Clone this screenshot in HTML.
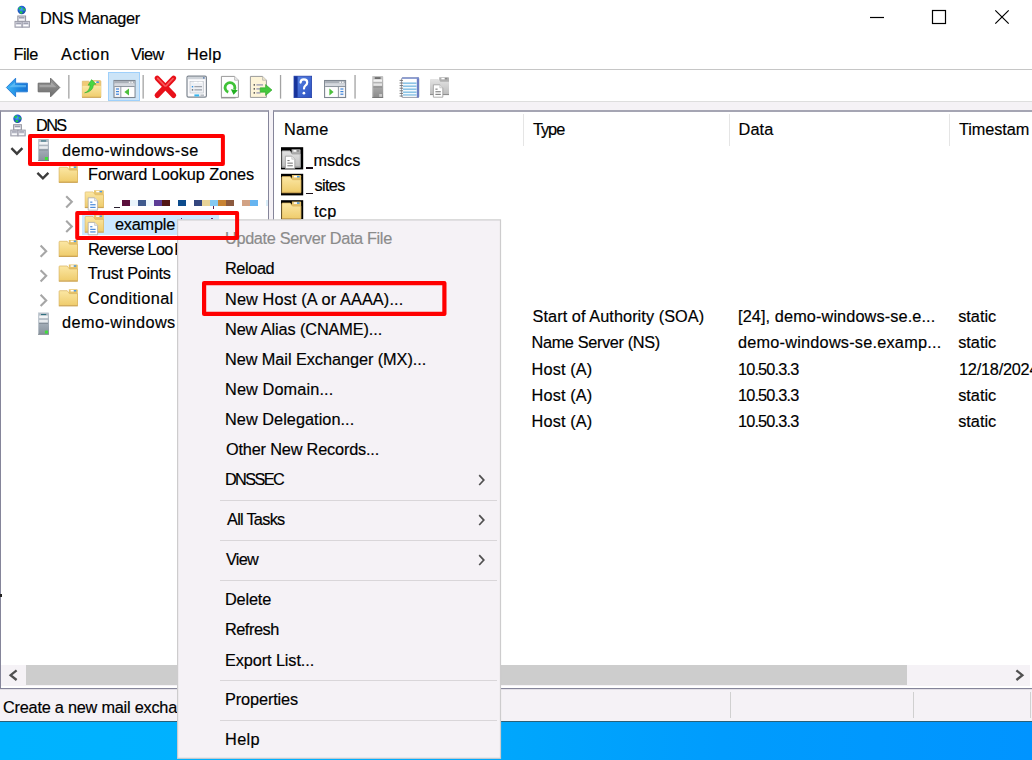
<!DOCTYPE html>
<html><head><meta charset="utf-8"><title>DNS Manager</title>
<style>
html,body{margin:0;padding:0;overflow:hidden;}
html{width:1032px;height:760px;}
body{width:1032px;height:760px;overflow:hidden;background:#fff;position:relative;font-family:"Liberation Sans",sans-serif;font-size:16px;color:#000;}
.a{position:absolute;}
.t{position:absolute;white-space:nowrap;line-height:20px;font-size:16.3px;height:20px;-webkit-text-stroke:0.18px currentColor;}
svg{position:absolute;overflow:visible;}
</style></head><body>
<!-- chrome lines -->
<div class="a" style="left:0;top:69px;width:1032px;height:1px;background:#c6c6c6"></div>
<div class="a" style="left:0;top:101px;width:1032px;height:9px;background:#f5f2f6"></div>
<div class="a" style="left:0;top:101px;width:1032px;height:1px;background:#dedede"></div>
<!-- panes -->
<div class="a" style="left:0;top:110px;width:269px;height:579px;background:#fff;border:1px solid #85859a;border-top:2px solid #a5a5b3;box-sizing:border-box"></div>
<div class="a" style="left:269px;top:110px;width:4px;height:579px;background:#f5f2f6"></div>
<div class="a" style="left:273px;top:110px;width:762px;height:579px;background:#fff;border:1px solid #85859a;border-top:2px solid #a5a5b3;box-sizing:border-box"></div>
<!-- column separators -->
<div class="a" style="left:523px;top:114px;width:1px;height:32px;background:#e5e5e5"></div>
<div class="a" style="left:729px;top:114px;width:1px;height:32px;background:#e5e5e5"></div>
<div class="a" style="left:949px;top:114px;width:1px;height:32px;background:#e5e5e5"></div>
<!-- selection highlight -->
<div class="a" style="left:82px;top:215px;width:137px;height:20px;background:#cce8ff"></div>
<!-- scrollbar -->
<div class="a" style="left:1px;top:665px;width:1029px;height:21px;background:#f5f2f6"></div>
<div class="a" style="left:26px;top:665px;width:881px;height:20px;background:#cdcdcd"></div>
<!-- status bar -->
<div class="a" style="left:0;top:689px;width:1032px;height:33px;background:#f5f2f6"></div>
<div class="a" style="left:730px;top:692px;width:1px;height:26px;background:#d0d0d0"></div>
<div class="a" style="left:913px;top:692px;width:1px;height:26px;background:#d0d0d0"></div>
<div class="a" style="left:1030px;top:692px;width:1px;height:26px;background:#d0d0d0"></div>
<div class="a" style="left:0;top:721px;width:1032px;height:1px;background:#2a6078"></div>
<div class="a" style="left:0;top:722px;width:1032px;height:38px;background:linear-gradient(90deg,#00b3ff 0%,#00b0ff 30%,#00a6fc 50%,#009cfd 70%,#0094ff 100%)"></div>
<!-- cursor artifact --><div class="a" style="left:0;top:594px;width:2px;height:3px;background:#222"></div>
<div class="a" style="left:0;top:689px;width:1032px;height:1px;background:#e2dfe6"></div>

<!-- texts -->
<div class="t" style="left:40.00px;top:8.35px;letter-spacing:-0.297px;">DNS Manager</div>
<div class="t" style="left:13.55px;top:43.60px;letter-spacing:-0.533px;">File</div>
<div class="t" style="left:61.00px;top:43.60px;letter-spacing:0.587px;">Action</div>
<div class="t" style="left:131.00px;top:43.60px;letter-spacing:-0.600px;">View</div>
<div class="t" style="left:187.00px;top:43.60px;letter-spacing:0.233px;">Help</div>
<div class="t" style="left:36.00px;top:114.85px;letter-spacing:-1.595px;">DNS</div>
<div class="t" style="left:62.00px;top:139.85px;letter-spacing:0.356px;">demo-windows-se</div>
<div class="t" style="left:88.00px;top:164.35px;letter-spacing:-0.065px;">Forward Lookup Zones</div>
<div class="t" style="left:115.00px;top:213.85px;letter-spacing:-0.224px;">example</div>
<div class="t" style="left:88.00px;top:238.85px;letter-spacing:-0.693px;">Reverse Loo</div>
<div class="t" style="left:174.40px;top:238.85px;letter-spacing:0.000px;">k</div>
<div class="t" style="left:87.80px;top:263.35px;letter-spacing:-0.279px;">Trust Points</div>
<div class="t" style="left:88.00px;top:288.35px;letter-spacing:0.373px;">Conditional</div>
<div class="t" style="left:62.00px;top:312.35px;letter-spacing:0.419px;">demo-windows</div>
<div class="t" style="left:284.00px;top:118.85px;letter-spacing:0.254px;">Name</div>
<div class="t" style="left:533.00px;top:118.85px;letter-spacing:-1.032px;">Type</div>
<div class="t" style="left:738.55px;top:118.85px;letter-spacing:0.081px;">Data</div>
<div class="t" style="left:959.00px;top:118.85px;letter-spacing:-0.094px;">Timestam</div>
<div class="t" style="left:313.55px;top:149.85px;letter-spacing:-0.074px;">msdcs</div>
<div class="t" style="left:314.55px;top:175.35px;letter-spacing:-0.684px;">sites</div>
<div class="t" style="left:314.00px;top:201.35px;letter-spacing:0.233px;">tcp</div>
<div class="t" style="left:532.55px;top:306.35px;letter-spacing:0.066px;">Start of Authority (SOA)</div>
<div class="t" style="left:531.55px;top:332.35px;letter-spacing:-0.350px;">Name Server (NS)</div>
<div class="t" style="left:531.55px;top:358.60px;letter-spacing:0.147px;">Host (A)</div>
<div class="t" style="left:531.55px;top:384.60px;letter-spacing:0.147px;">Host (A)</div>
<div class="t" style="left:531.55px;top:410.85px;letter-spacing:0.147px;">Host (A)</div>
<div class="t" style="left:738.00px;top:306.35px;letter-spacing:0.106px;">[24], demo-windows-se.e...</div>
<div class="t" style="left:738.00px;top:332.35px;letter-spacing:0.219px;">demo-windows-se.examp...</div>
<div class="t" style="left:738.00px;top:358.60px;letter-spacing:-0.838px;">10.50.3.3</div>
<div class="t" style="left:738.00px;top:384.60px;letter-spacing:-0.838px;">10.50.3.3</div>
<div class="t" style="left:738.00px;top:410.85px;letter-spacing:-0.838px;">10.50.3.3</div>
<div class="t" style="left:958.20px;top:306.35px;letter-spacing:-0.003px;">static</div>
<div class="t" style="left:958.20px;top:332.35px;letter-spacing:-0.003px;">static</div>
<div class="t" style="left:959.00px;top:358.60px;letter-spacing:-0.222px;">12/18/2024</div>
<div class="t" style="left:958.20px;top:384.60px;letter-spacing:-0.003px;">static</div>
<div class="t" style="left:958.20px;top:410.85px;letter-spacing:-0.003px;">static</div>
<div class="t" style="left:3.00px;top:696.85px;letter-spacing:-0.227px;">Create a new mail excha</div>
<!-- icons -->
<svg width="1032" height="760" style="left:0;top:0" viewBox="0 0 1032 760">
<defs>
<linearGradient id="gF" x1="0" y1="0" x2="0" y2="1"><stop offset="0" stop-color="#fbe7a4"/><stop offset="1" stop-color="#efcc6c"/></linearGradient>
<linearGradient id="gFg" x1="0" y1="0" x2="0" y2="1"><stop offset="0" stop-color="#e4e4e4"/><stop offset="1" stop-color="#bdbdbd"/></linearGradient>
<linearGradient id="gS" x1="0" y1="0" x2="0" y2="1"><stop offset="0" stop-color="#b9c2cb"/><stop offset="0.5" stop-color="#a3adb7"/><stop offset="1" stop-color="#87919b"/></linearGradient>
<linearGradient id="gSg" x1="0" y1="0" x2="0" y2="1"><stop offset="0" stop-color="#c4c4c4"/><stop offset="0.5" stop-color="#a8a8a8"/><stop offset="1" stop-color="#8a8a8a"/></linearGradient>
<radialGradient id="gG" cx="0.45" cy="0.4" r="0.6"><stop offset="0" stop-color="#4aa8f4"/><stop offset="0.6" stop-color="#1f62d0"/><stop offset="1" stop-color="#1b3fa6"/></radialGradient>
<linearGradient id="gB" x1="0" y1="0" x2="1" y2="0"><stop offset="0" stop-color="#3fb6f5"/><stop offset="0.6" stop-color="#1a86e0"/><stop offset="1" stop-color="#1973d2"/></linearGradient>
<linearGradient id="gGr" x1="0" y1="0" x2="0" y2="1"><stop offset="0" stop-color="#9a9a9a"/><stop offset="1" stop-color="#6e6e6e"/></linearGradient>
<linearGradient id="gH" x1="0" y1="0" x2="1" y2="1"><stop offset="0" stop-color="#5a86e6"/><stop offset="1" stop-color="#2a4fc0"/></linearGradient>
<!-- DNS icon: origin at (0,0), size 15x22 -->
<g id="dns">
 <circle cx="7.3" cy="4.3" r="4.2" fill="url(#gG)"/>
 <path d="M4.2,2.2 q1.6,-1.6 3,-0.6 q-0.4,1.8 -2,2.2 q-1.2,0.2 -1,-1.6z M8.8,2.6 q1.6,-0.4 2.2,1.6 q-0.6,1.2 -1.8,0.6 q-0.8,-1 -0.4,-2.2z M5.4,5.6 q1.6,-0.4 3,0.8 q-0.4,1.8 -2,1.8 q-1.4,-0.8 -1,-2.6z" fill="#22cc44"/>
 <rect x="3.4" y="10.3" width="7.8" height="5.4" fill="#dcdde6" stroke="#94959f" stroke-width="1"/>
 <rect x="0.6" y="15.7" width="7.2" height="5.8" fill="#dcdde6" stroke="#9b9ca8" stroke-width="1"/>
 <rect x="7.8" y="15.7" width="7.2" height="5.8" fill="#dcdde6" stroke="#9b9ca8" stroke-width="1"/>
 <rect x="4.6" y="11.4" width="5.4" height="1.2" fill="#9a9cab"/><rect x="4.6" y="13.6" width="5.4" height="1.1" fill="#fff"/>
 <rect x="1.8" y="16.9" width="4.8" height="1.3" fill="#9a9cab"/><rect x="1.8" y="19.3" width="4.8" height="1.1" fill="#fff"/>
 <rect x="9" y="16.9" width="4.8" height="1.3" fill="#9a9cab"/><rect x="9" y="19.3" width="4.8" height="1.1" fill="#fff"/>
</g>
<!-- server icon 11x22 -->
<g id="srv">
 <rect x="0" y="0" width="11" height="22" rx="0.8" fill="url(#gS)"/>
 <rect x="0" y="0" width="1" height="22" fill="#c9d0d7" opacity="0.7"/>
 <rect x="3" y="1.4" width="5.2" height="1.1" fill="#2e6f7e"/>
 <rect x="1.2" y="3" width="8.6" height="2.6" fill="#f2f4f6"/>
 <rect x="1.2" y="7.2" width="8.6" height="2.6" fill="#e8ebee"/>
 <rect x="1" y="10.6" width="9" height="0.8" fill="#7e8892"/>
 <rect x="6.9" y="18" width="3" height="3" fill="#3fe03a"/>
 <rect x="0" y="21.3" width="11" height="0.7" fill="#6f7983"/>
</g>
<g id="srvg">
 <rect x="0" y="0" width="11" height="22" rx="0.8" fill="url(#gSg)"/>
 <rect x="0" y="0" width="1" height="22" fill="#d6d6d6" opacity="0.7"/>
 <rect x="2.6" y="1.4" width="5.8" height="1.3" fill="#4a4a4a"/>
 <rect x="1.2" y="3.4" width="8.6" height="2.4" fill="#f2f2f2"/>
 <rect x="1.2" y="7.4" width="8.6" height="2.4" fill="#e6e6e6"/>
 <rect x="1" y="10.6" width="9" height="0.8" fill="#808080"/>
 <rect x="7" y="18" width="2.8" height="2.8" fill="#c8c8c8"/>
 <rect x="0" y="21.3" width="11" height="0.7" fill="#6e6e6e"/>
</g>
<!-- folder 19x16 -->
<g id="fld">
 <path d="M10,0.3 H18 Q19,0.3 19,1.3 V16.4 H10Z" fill="#e6c268"/>
 <rect x="11.8" y="1" width="3.2" height="1.5" fill="#fff"/><rect x="15" y="1" width="2.4" height="1.5" fill="#4a9be6"/>
 <path d="M0.9,1.7 H8.4 L10.6,4.6 H18.7 V16.5 H0.3 V2.5 Q0.3,1.7 0.9,1.7Z" fill="url(#gF)" stroke="#d8b25c" stroke-width="0.7"/>
 <path d="M0,16.3 H19 V17.4 H0Z" fill="#cda555"/>
</g>
<g id="fldg">
 <path d="M10,0.3 H18 Q19,0.3 19,1.3 V16.4 H10Z" fill="#b0b0b0"/>
 <rect x="11.8" y="1" width="3.2" height="1.5" fill="#fff"/><rect x="15" y="1" width="2.4" height="1.5" fill="#8a8a8a"/>
 <path d="M0.9,1.7 H8.4 L10.6,4.6 H18.7 V16.5 H0.3 V2.5 Q0.3,1.7 0.9,1.7Z" fill="url(#gFg)" stroke="#9a9a9a" stroke-width="0.7"/>
 <path d="M0,16.3 H19 V17.4 H0Z" fill="#8f8f8f"/>
</g>
<!-- small document 10x13 -->
<g id="doc">
 <path d="M0.4,0.4 H6.8 L9.8,3.4 V12.8 H0.4Z" fill="#fff" stroke="#a9a9a9" stroke-width="0.8"/>
 <path d="M6.8,0.4 V3.4 H9.8" fill="#e9e9e9" stroke="#b5b5b5" stroke-width="0.6"/>
 <rect x="2.4" y="4.2" width="2.2" height="1.1" fill="#3b7fd6"/>
 <rect x="2.4" y="6.8" width="5.4" height="1.1" fill="#3b7fd6"/>
 <rect x="2.4" y="9.4" width="5.4" height="1.1" fill="#3b7fd6"/>
</g>
<g id="docg">
 <path d="M0.4,0.4 H6.8 L9.8,3.4 V12.8 H0.4Z" fill="#fff" stroke="#9a9a9a" stroke-width="0.8"/>
 <path d="M6.8,0.4 V3.4 H9.8" fill="#e9e9e9" stroke="#b5b5b5" stroke-width="0.6"/>
 <rect x="2.4" y="4.2" width="2.2" height="1.1" fill="#7c7c7c"/>
 <rect x="2.4" y="6.8" width="5.4" height="1.1" fill="#7c7c7c"/>
 <rect x="2.4" y="9.4" width="5.4" height="1.1" fill="#7c7c7c"/>
</g>
<!-- zone folder 19x21 -->
<g id="zone">
 <path d="M9.2,0.2 H18.2 Q19,0.2 19,1 V17 H9.2Z" fill="#e9c66e"/>
 <rect x="11.4" y="0.9" width="3.4" height="1.4" fill="#fff"/><rect x="14.8" y="0.9" width="2.4" height="1.4" fill="#4a9be6"/>
 <path d="M0.8,1.9 H8.2 L10.4,4.8 H18.7 V17.2 H0.3 V2.7 Q0.3,1.9 0.8,1.9Z" fill="url(#gF)" stroke="#dcb660" stroke-width="0.6"/>
 <path d="M0,17 H19 V18.1 H0Z" fill="#cda555"/>
 <use href="#doc" x="3" y="7.4"/>
</g>
<g id="zoneg">
 <path d="M9.2,0.2 H18.2 Q19,0.2 19,1 V17 H9.2Z" fill="#b0b0b0"/>
 <rect x="11.4" y="0.9" width="3.4" height="1.4" fill="#fff"/><rect x="14.8" y="0.9" width="2.4" height="1.4" fill="#8a8a8a"/>
 <path d="M0.8,1.9 H8.2 L10.4,4.8 H19 V17.2 H0 V2.7 Q0,1.9 0.8,1.9Z" fill="url(#gFg)"/>
 <path d="M0,17 H19 V18.1 H0Z" fill="#8f8f8f"/>
 <use href="#docg" x="3" y="7.4"/>
</g>
<path id="chd" d="M0,0 L5.5,5.5 L11,0" fill="none" stroke="#3c3c3c" stroke-width="2.4"/>
<path id="chr" d="M0,0 L5.6,5.6 L0,11.2" fill="none" stroke="#a6a6a6" stroke-width="2.1"/>
<path id="chm" d="M0,0 L4.6,4.9 L0,9.8" fill="none" stroke="#505050" stroke-width="1.7"/>
</defs>
<!-- title + tree DNS icons -->
<use href="#dns" x="14.4" y="5.7"/>
<use href="#dns" x="10.2" y="114.4"/>
<!-- window controls -->
<path d="M870,17.5 H884" stroke="#000" stroke-width="1.2"/>
<rect x="932.5" y="10.5" width="13" height="13" fill="none" stroke="#000" stroke-width="1.2"/>
<path d="M995.3,10.3 L1008.7,23.7 M1008.7,10.3 L995.3,23.7" stroke="#000" stroke-width="1.2"/>
<!-- tree icons -->
<use href="#chd" x="11.4" y="148.2"/>
<use href="#srv" x="38" y="139"/>
<use href="#chd" x="37.4" y="172.8"/>
<use href="#fld" x="58.8" y="165.5"/>
<use href="#chr" x="66.2" y="196.2"/>
<use href="#zone" x="84.8" y="190"/>
<use href="#chr" x="66.2" y="220.8"/>
<use href="#zone" x="84.8" y="214.6"/>
<use href="#chr" x="40.6" y="245.6"/>
<use href="#fld" x="58.8" y="239.6"/>
<use href="#chr" x="40.6" y="270.2"/>
<use href="#fld" x="58.8" y="264.3"/>
<use href="#chr" x="40.6" y="294.8"/>
<use href="#fld" x="58.8" y="289"/>
<use href="#srv" x="38" y="312.6"/>
<!-- TOOLBAR -->
<!-- back arrow -->
<path d="M6.4,87.5 L15.6,78.2 V83.2 H27.4 V91.8 H15.6 V96.8Z" fill="url(#gB)" stroke="#2a7fd8" stroke-width="1" stroke-linejoin="round"/>
<path d="M9.5,87.3 L15,82 V85 H26 V87.3Z" fill="#7fd0fb" opacity="0.55"/>
<!-- forward arrow -->
<path d="M59.8,87.5 L50.6,78.2 V83.2 H38.2 V91.8 H50.6 V96.8Z" fill="url(#gGr)" stroke="#6a6a6a" stroke-width="1" stroke-linejoin="round"/>
<path d="M56.5,87.3 L51,82 V85 H39.5 V87.3Z" fill="#c2c2c2" opacity="0.5"/>
<rect x="68.2" y="75" width="1.3" height="23.6" fill="#a3a3a3"/>
<!-- up folder -->
<path d="M82.3,81.2 H88.6 L90.2,82.6 H91.5 V80.6 H100 Q100.9,80.6 100.9,81.5 V97 H82.3Z" fill="#f1ca76" stroke="#d8b25c" stroke-width="0.6"/>
<rect x="94.6" y="81.5" width="2" height="1.4" fill="#fff"/><ellipse cx="97.6" cy="82.2" rx="1.5" ry="0.9" fill="#4f95e4"/>
<rect x="82.4" y="85.9" width="18.5" height="11.2" fill="url(#gF)"/>
<rect x="82" y="96.8" width="19" height="1" fill="#c9a050"/>
<path d="M84.6,92.8 q4.8,-1.2 5.6,-7.8 l-2.2,0.2 l3.6,-5.6 l4.4,4.6 l-2.4,0.3 q-0.6,7.4 -9,8.3z" fill="#48d642" stroke="#27a826" stroke-width="0.5"/>
<!-- selected button -->
<rect x="108.5" y="72.5" width="31" height="28" fill="#cce4f7" stroke="#9fd0fb" stroke-width="1"/>
<!-- console tree icon -->
<g id="con1">
<rect x="114" y="80.5" width="21" height="17" fill="#f4f4f6" stroke="#7d858f" stroke-width="1.1"/>
<rect x="114.5" y="81" width="20" height="2.6" fill="#aab0b8"/>
<rect x="114.5" y="83.6" width="20" height="2.4" fill="#d4d8de"/>
<rect x="114.5" y="86" width="20" height="0.9" fill="#858d97"/>
<rect x="120.4" y="86.5" width="1" height="10.5" fill="#858d97"/>
<rect x="128.8" y="81.6" width="1.6" height="1.4" fill="#f2f2f2"/><rect x="131.4" y="81.6" width="1.6" height="1.4" fill="#f2f2f2"/>
<rect x="116" y="88.4" width="3" height="1.2" fill="#3f86dc"/><rect x="116" y="91" width="3" height="1.2" fill="#3f86dc"/><rect x="116" y="93.6" width="3" height="1.2" fill="#3f86dc"/>
<rect x="121.6" y="87.2" width="12.6" height="9.6" fill="#fdfdfd"/>
<path d="M124.4,92 L129,88.6 V95.4Z" fill="#4cbf3c"/>
</g>
<rect x="142.5" y="75" width="1.3" height="23.6" fill="#a3a3a3"/>
<!-- red X -->
<path d="M157.2,78.2 L173.6,95.4 M173.6,78.2 L157.2,95.4" stroke="#e81019" stroke-width="5.2" stroke-linecap="round"/>
<path d="M157.6,78.4 L165,86 M173,78.6 L166,86" stroke="#f77" stroke-width="1.6" stroke-linecap="round" opacity="0.7"/>
<!-- properties -->
<rect x="187" y="76.2" width="19.4" height="21" rx="1.4" fill="#fbfbfd" stroke="#7e8690" stroke-width="1.2"/>
<rect x="187.8" y="77" width="17.8" height="2.2" fill="#cfd4da"/>
<rect x="203" y="77.2" width="1.6" height="1.4" fill="#5d7fb0"/>
<rect x="190" y="81.4" width="13.6" height="11.6" fill="#eef0f4" stroke="#b9bec6" stroke-width="0.6"/>
<rect x="194" y="81.8" width="3.4" height="1.3" fill="#fff"/><rect x="198.6" y="81.8" width="3.4" height="1.3" fill="#fff"/>
<rect x="191.8" y="86" width="1.4" height="1.4" fill="#2f8fe0"/><rect x="194.4" y="86.2" width="7.6" height="1" fill="#8a9099"/>
<rect x="191.8" y="89.2" width="1.4" height="1.4" fill="#5d646e"/><rect x="194.4" y="89.4" width="7.6" height="1" fill="#8a9099"/>
<rect x="194.4" y="94.4" width="4.8" height="2" fill="#34b4ee"/><rect x="200.4" y="94.4" width="3.6" height="2" fill="#b9bec6"/>
<!-- refresh -->
<path d="M221.4,76.4 H234.6 L238.4,80.2 V97.4 H221.4Z" fill="#fefefe" stroke="#9a9a9a" stroke-width="1"/>
<path d="M234.6,76.4 V80.2 H238.4" fill="#ececec" stroke="#aaa" stroke-width="0.7"/>
<path d="M235.6,97.9 H221 " stroke="#8a8a8a" stroke-width="1"/>
<path d="M228.3,92.1 A4.9,4.9 0 1 1 234.4,89.6" fill="none" stroke="#3fc236" stroke-width="2.8"/>
<path d="M230.8,89.2 L237.8,90.2 L233.6,94.8Z" fill="#22b022"/>
<!-- export list -->
<path d="M250.4,76.4 H262.6 L266.4,80.2 V97.4 H250.4Z" fill="#fdf4d8" stroke="#9a9a9a" stroke-width="1"/>
<path d="M262.6,76.4 V80.2 H266.4" fill="#f3ead0" stroke="#aaa" stroke-width="0.7"/>
<rect x="253.6" y="84.2" width="1.4" height="1.4" fill="#444"/><rect x="256.4" y="84.3" width="6.6" height="1.2" fill="#8d8fae"/>
<rect x="253.6" y="88.2" width="1.4" height="1.4" fill="#444"/><rect x="256.4" y="88.3" width="4" height="1.2" fill="#8d8fae"/>
<rect x="253.6" y="92.2" width="1.4" height="1.4" fill="#444"/><rect x="256.4" y="92.3" width="4" height="1.2" fill="#8d8fae"/>
<path d="M260.2,87.8 H265.6 V84.6 L272,90 L265.6,95.4 V92.2 H260.2Z" fill="#45c83c" stroke="#2aa228" stroke-width="0.6"/>
<rect x="279.9" y="75" width="1.3" height="23.6" fill="#a3a3a3"/>
<!-- help -->
<rect x="294" y="76.2" width="17.6" height="21.4" fill="url(#gH)"/>
<rect x="294" y="76.2" width="3.6" height="21.4" fill="#17339a"/>
<rect x="294" y="76.2" width="17.6" height="21.4" fill="none" stroke="#2440a8" stroke-width="0.8"/>
<path d="M300.6,82.6 q0,-3.2 3.3,-3.2 q3.3,0 3.3,3 q0,1.8 -1.6,2.9 q-1.6,1.1 -1.6,3.3" fill="none" stroke="#fff" stroke-width="2.2" stroke-linecap="round"/>
<circle cx="303.9" cy="93.2" r="1.35" fill="#fff"/>
<!-- console action icon -->
<rect x="324.6" y="80.5" width="21" height="17" fill="#f4f4f6" stroke="#7d858f" stroke-width="1.1"/>
<rect x="325.1" y="81" width="20" height="2.6" fill="#aab0b8"/>
<rect x="325.1" y="83.6" width="20" height="2.4" fill="#d4d8de"/>
<rect x="325.1" y="86" width="20" height="0.9" fill="#858d97"/>
<rect x="337.8" y="86.5" width="1" height="10.5" fill="#858d97"/>
<rect x="339.4" y="81.6" width="1.6" height="1.4" fill="#f2f2f2"/><rect x="342" y="81.6" width="1.6" height="1.4" fill="#f2f2f2"/>
<rect x="340.4" y="88.4" width="3" height="1.2" fill="#3f86dc"/><rect x="340.4" y="91" width="3" height="1.2" fill="#3f86dc"/><rect x="340.4" y="93.6" width="3" height="1.2" fill="#3f86dc"/>
<rect x="325.6" y="87.2" width="12" height="9.6" fill="#fdfdfd"/>
<path d="M333.6,92 L329.4,88.4 V95.6Z" fill="#4cbf3c"/>
<rect x="354.4" y="75" width="1.3" height="23.6" fill="#a3a3a3"/>
<!-- gray server -->
<use href="#srvg" x="372.2" y="76"/>
<!-- notebook -->
<rect x="401.6" y="77.8" width="17.2" height="19.6" rx="1" fill="#fff" stroke="#8c92a2" stroke-width="0.9"/>
<rect x="416.8" y="77.6" width="2.2" height="20" fill="#6d7fc4"/>
<rect x="402" y="77.4" width="17" height="1.4" fill="#7d8fd0"/>
<rect x="403" y="82.4" width="13.6" height="1.7" fill="#8cc4e6"/><rect x="403" y="85.4" width="13.6" height="1.7" fill="#8cc4e6"/><rect x="403" y="88.4" width="13.6" height="1.7" fill="#8cc4e6"/><rect x="403" y="91.4" width="13.6" height="1.7" fill="#8cc4e6"/><rect x="403" y="94.2" width="13.6" height="1.5" fill="#8cc4e6"/>
<g fill="none" stroke="#6b6b6b" stroke-width="0.9"><path d="M399.6,80.4 h3.4 M399.6,83 h3.4 M399.6,85.6 h3.4 M399.6,88.2 h3.4 M399.6,90.8 h3.4 M399.6,93.4 h3.4 M399.6,96 h3.4"/></g>
<!-- gray zone folder -->
<use href="#zoneg" x="430" y="77"/>
<!-- LIST -->
<rect x="281" y="147.2" width="22.2" height="22.2" fill="#000"/>
<g transform="translate(281.6,149) scale(1,1.09)"><use href="#fldg"/></g>
<use href="#docg" x="285" y="155.8" transform="translate(0,0)"/>
<rect x="281" y="173.8" width="22.2" height="21.6" fill="#000"/>
<g transform="translate(281.6,174.8) scale(1.03,1.06)"><use href="#fld"/></g>
<rect x="281" y="200.2" width="22.2" height="19" fill="#000"/>
<g transform="translate(281.6,201.2) scale(1.03,1.06)"><use href="#fld"/></g>
<!-- SCROLL -->
<path d="M16.6,670.4 L10.6,675.2 L16.6,680" fill="none" stroke="#505050" stroke-width="2.3"/>
<path d="M1016.4,670.4 L1022.4,675.2 L1016.4,680" fill="none" stroke="#505050" stroke-width="2.3"/>
<!-- pixelated (redacted) zone name -->
<g shape-rendering="crispEdges">
<rect x="114.4" y="207" width="5.8" height="1.3" fill="#2a2030"/>
<rect x="306.4" y="167.2" width="6.6" height="1.3" fill="#1a1018"/>
<rect x="306.4" y="192.7" width="6.6" height="1.3" fill="#1a1018"/>
<rect x="181" y="217.7" width="1.3" height="1" fill="#6a2a6a"/>
<rect x="211.2" y="217.7" width="1.3" height="1" fill="#6a2a6a"/>
<rect x="212.8" y="206.4" width="1.3" height="2.8" fill="#5a1a4a"/>
<rect x="122" y="200" width="8" height="6" fill="#5a0f3c"/>
<rect x="130" y="200" width="8" height="6" fill="#e9f5fc"/>
<rect x="138" y="200" width="8" height="6" fill="#3f5a8e"/>
<rect x="146" y="200" width="8" height="6" fill="#eef8fd"/>
<rect x="154" y="200" width="8" height="6" fill="#5b3c96"/>
<rect x="162" y="200" width="8" height="6" fill="#521616"/>
<rect x="178" y="200" width="8" height="6" fill="#0c4b8c"/>
<rect x="194" y="200" width="8" height="6" fill="#34467e"/>
<rect x="202" y="200" width="8" height="6" fill="#e8d498"/>
<rect x="210" y="200" width="8" height="6" fill="#84c8f0"/>
<rect x="218" y="200" width="8" height="6" fill="#c88434"/>
<rect x="226" y="200" width="8" height="6" fill="#8c5a3e"/>
<rect x="242" y="200" width="8" height="6" fill="#d2a284"/>
<rect x="250" y="200" width="8" height="6" fill="#66b4f0"/>
<rect x="266" y="200" width="2" height="6" fill="#d8ecf8"/>
</g>
</svg>

<!-- context menu -->
<svg width="1032" height="760" style="left:0;top:0" viewBox="0 0 1032 760"><rect x="177.6" y="219.9" width="322.9" height="538.4" fill="#f5f2f6" stroke="#cdcccd" stroke-width="1.2"/></svg>
<div class="a" style="left:220px;top:500px;width:277px;height:1px;background:#d9d6d9"></div>
<div class="a" style="left:220px;top:540px;width:277px;height:1px;background:#d9d6d9"></div>
<div class="a" style="left:220px;top:580px;width:277px;height:1px;background:#d9d6d9"></div>
<div class="a" style="left:220px;top:680px;width:277px;height:1px;background:#d9d6d9"></div>
<div class="a" style="left:220px;top:720px;width:277px;height:1px;background:#d9d6d9"></div>

<div class="t" style="left:225.00px;top:228.10px;letter-spacing:-0.339px;color:#8b8b8b;">Update Server Data File</div>
<div class="t" style="left:225.00px;top:258.10px;letter-spacing:-0.392px;">Reload</div>
<div class="t" style="left:225.00px;top:288.60px;letter-spacing:0.121px;">New Host (A or AAAA)...</div>
<div class="t" style="left:225.00px;top:318.60px;letter-spacing:-0.106px;">New Alias (CNAME)...</div>
<div class="t" style="left:225.00px;top:348.60px;letter-spacing:-0.059px;">New Mail Exchanger (MX)...</div>
<div class="t" style="left:225.00px;top:378.60px;letter-spacing:0.118px;">New Domain...</div>
<div class="t" style="left:225.00px;top:408.60px;letter-spacing:0.043px;">New Delegation...</div>
<div class="t" style="left:226.00px;top:438.60px;letter-spacing:-0.176px;">Other New Records...</div>
<div class="t" style="left:225.00px;top:469.35px;letter-spacing:-1.642px;">DNSSEC</div>
<div class="t" style="left:227.00px;top:509.35px;letter-spacing:-0.719px;">All Tasks</div>
<div class="t" style="left:226.00px;top:549.35px;letter-spacing:-0.750px;">View</div>
<div class="t" style="left:225.00px;top:589.35px;letter-spacing:-0.176px;">Delete</div>
<div class="t" style="left:225.00px;top:619.35px;letter-spacing:-0.469px;">Refresh</div>
<div class="t" style="left:225.00px;top:649.85px;letter-spacing:-0.100px;">Export List...</div>
<div class="t" style="left:225.00px;top:689.35px;letter-spacing:-0.113px;">Properties</div>
<div class="t" style="left:225.00px;top:729.35px;letter-spacing:0.383px;">Help</div>
<!-- red annotation rectangles -->
<svg width="1032" height="760" style="left:0;top:0" viewBox="0 0 1032 760">
<rect x="30" y="136.1" width="192.9" height="27.8" fill="none" stroke="#ff0000" stroke-width="4" stroke-linejoin="round"/>
<rect x="77.2" y="213.1" width="159.9" height="24.8" fill="none" stroke="#ff0000" stroke-width="4" stroke-linejoin="round"/>
<rect x="204.1" y="283.1" width="240.3" height="30.8" fill="none" stroke="#ff0000" stroke-width="4.2" stroke-linejoin="round"/>
<!-- menu chevrons -->
<use href="#chm" x="479.2" y="475.2"/>
<use href="#chm" x="479.2" y="515.2"/>
<use href="#chm" x="479.2" y="555.2"/>
</svg>

</body></html>
